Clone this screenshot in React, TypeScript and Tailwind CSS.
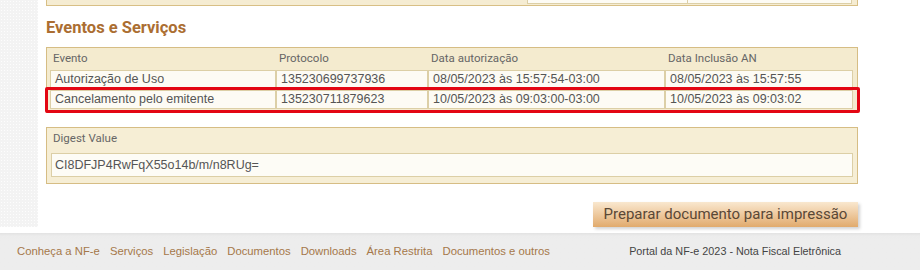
import React from "react";

const tahoma = "font-['Roboto','Open_Sans',sans-serif]";
const arial = "font-['Liberation_Sans',Arial,sans-serif]";

type Evento = {
  evento: string;
  protocolo: string;
  autorizacao: string;
  inclusao: string;
};

const eventos: Evento[] = [
  {
    evento: "Autorização de Uso",
    protocolo: "135230699737936",
    autorizacao: "08/05/2023 às 15:57:54-03:00",
    inclusao: "08/05/2023 às 15:57:55",
  },
  {
    evento: "Cancelamento pelo emitente",
    protocolo: "135230711879623",
    autorizacao: "10/05/2023 às 09:03:00-03:00",
    inclusao: "10/05/2023 às 09:03:02",
  },
];

const footerLinks = [
  "Conheça a NF-e",
  "Serviços",
  "Legislação",
  "Documentos",
  "Downloads",
  "Área Restrita",
  "Documentos e outros",
];

const cols = "grid grid-cols-[226px_152px_237px_188px]";

const Cell = ({ children }: { children: React.ReactNode }) => (
  <div
    className={`${arial} h-[19px] border border-[#dccfa6] bg-[#fdfbf4] px-[4px] text-[12.5px] leading-[17px] text-[#555] whitespace-nowrap overflow-hidden`}
  >
    {children}
  </div>
);

const App = () => {
  return (
    <div className="flex h-[270px] w-[920px] flex-col overflow-hidden bg-white">
      <div className="flex flex-1">
        <div className="w-[38px] bg-[#f3f3f3] bg-[radial-gradient(circle,#fdfdfd_0.8px,transparent_1px)] bg-[length:3px_3px]" />
        <div className="flex-1 bg-white pl-[8px]">
          <div className="w-[812px]">
            {/* bottom of the block above */}
            <div className="flex h-[6px] justify-end border-x border-b border-[#d8bf85] bg-[#f5ecd2] pr-[5px]">
              <div className="flex h-[4px] w-[325px] border-x border-b border-[#dccfa6] bg-[#fdfbf4]">
                <div className="w-[160px] border-r border-[#dccfa6]" />
              </div>
            </div>

            <h2
              className={`${tahoma} mt-[12px] text-[16.5px] font-bold leading-[19px] text-[#ab6e32]`}
            >
              Eventos e Serviços
            </h2>

            <div className="relative mt-[10px] border border-[#d6bd84] bg-[#f4ebcf] pl-[3px] pr-[4px] pb-[3px]">
              <div className={`${cols} h-[22px] items-center ${tahoma} text-[11.5px] text-[#666]`}>
                <div className="pl-[3px]">Evento</div>
                <div className="pl-[3px]">Protocolo</div>
                <div className="pl-[3px]">Data autorização</div>
                <div className="pl-[3px]">Data Inclusão AN</div>
              </div>
              <div className="flex flex-col gap-[1px]">
                {eventos.map((e) => (
                  <div key={e.protocolo} className={cols}>
                    <Cell>{e.evento}</Cell>
                    <Cell>{e.protocolo}</Cell>
                    <Cell>{e.autorizacao}</Cell>
                    <Cell>{e.inclusao}</Cell>
                  </div>
                ))}
              </div>
              <div className="absolute left-[-2px] top-[39px] h-[26px] w-[815px] rounded-[2px] border-[3px] border-[#e30613]" />
            </div>

            <div className="mt-[14px] border border-[#d6bd84] bg-[#f6eed5] px-[4px] pb-[6px]">
              <div className={`${tahoma} h-[20px] pl-[2px] text-[11.5px] leading-[20px] text-[#666]`}>
                Digest Value
              </div>
              <div
                className={`${arial} mt-[5px] h-[24px] border border-[#dccfa6] bg-[#fdfcf6] px-[3px] text-[12.5px] leading-[22px] text-[#555]`}
              >
                CI8DFJP4RwFqX55o14b/m/n8RUg=
              </div>
            </div>

            <div className="mt-[18px] flex justify-end">
              <button
                className={`${tahoma} h-[25px] w-[265px] bg-gradient-to-b from-[#f9e8cf] to-[#e1aa6c] text-[15px] leading-[25px] text-[#5a4836] shadow-[2px_2px_3px_rgba(0,0,0,0.18)]`}
              >
                Preparar documento para impressão
              </button>
            </div>
          </div>
        </div>
      </div>

      <footer className="mt-[6px] h-[37px] bg-gradient-to-b from-[#e2e2e2] via-[#ececec] via-[8%] to-[#ededed] to-[20%]">
        <div className={`${arial} flex h-full items-center justify-between pl-[17px] pr-[79px]`}>
          <nav className="flex gap-[10px] text-[11.3px] text-[#a5784a]">
            {footerLinks.map((l) => (
              <span key={l}>{l}</span>
            ))}
          </nav>
          <p className="text-[10.8px] text-[#444]">Portal da NF-e 2023 - Nota Fiscal Eletrônica</p>
        </div>
      </footer>
    </div>
  );
};

export default App;
